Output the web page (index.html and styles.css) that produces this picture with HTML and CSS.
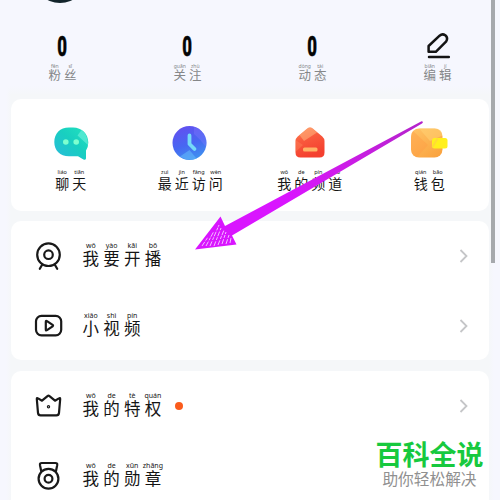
FILE: index.html
```html
<!DOCTYPE html>
<html lang="zh-CN">
<head>
<meta charset="utf-8">
<title>我的</title>
<link rel="stylesheet" href="styles.css">
</head>
<body>
<main class="screen">
  <header class="profile"><div class="avatar"></div></header>

  <section class="stats">
    <div class="stat"><div class="value"><b>0</b></div><div class="label small"><span class="ch"><i>fěn</i>粉</span><span class="ch"><i>sī</i>丝</span></div></div>
    <div class="stat"><div class="value"><b>0</b></div><div class="label small"><span class="ch"><i>guān</i>关</span><span class="ch"><i>zhù</i>注</span></div></div>
    <div class="stat"><div class="value"><b>0</b></div><div class="label small"><span class="ch"><i>dòng</i>动</span><span class="ch"><i>tài</i>态</span></div></div>
    <div class="stat"><div class="value">
      <svg width="26" height="30" viewBox="0 0 26 30" fill="none" stroke="#141414" stroke-width="2.5" stroke-linecap="round" stroke-linejoin="round"><path d="M2.600 20.800V15L13.600 4.700Q16.300 2.300 19.300 4.300Q22.500 7.100 20 10.700L9.800 20.800Z"/><path d="M3 26H22.800"/></svg>
    </div><div class="label small"><span class="ch"><i>biān</i>编</span><span class="ch"><i>jí</i>辑</span></div></div>
  </section>

  <section class="card shortcuts">
    <div class="shortcut">
      <svg width="40" height="40" viewBox="0 0 40 40">
        <defs><linearGradient id="chat" x1="0" y1="1" x2="1" y2="0"><stop offset="0" stop-color="#2ab9dc"/><stop offset=".55" stop-color="#18cfc0"/><stop offset="1" stop-color="#22e3be"/></linearGradient></defs>
        <path d="M18 4.500h4C31 4.500 37.300 11 37.300 19.500Q37.300 24 35 27.500V35.500Q34.500 37.500 32.500 36.500L27 33.200H18C9 33.200 3.300 27.500 3.300 19S9 4.500 18 4.500Z" fill="url(#chat)"/>
        <path d="M26.500 12.500l4-5.500q6.500 4.500 6.500 15Z" fill="#62ecd7" opacity=".75"/>
        <circle cx="14.800" cy="19" r="2.800" fill="#7dffcf"/><circle cx="25.200" cy="19" r="2.800" fill="#7dffcf"/>
      </svg>
      <div class="label medium"><span class="ch"><i>liáo</i>聊</span><span class="ch"><i>tiān</i>天</span></div>
    </div>
    <div class="shortcut">
      <svg width="40" height="40" viewBox="0 0 40 40">
        <defs><linearGradient id="clock" x1=".25" y1="0" x2=".6" y2="1"><stop offset="0" stop-color="#634ff0"/><stop offset=".55" stop-color="#4767f2"/><stop offset="1" stop-color="#3f91ef"/></linearGradient></defs>
        <circle cx="19.500" cy="20" r="17" fill="url(#clock)"/>
        <path d="M24 11Q31 17 36 24Q38 17 33.500 11Q29 5 24 4Z" fill="#8a82ff" opacity=".3"/>
        <path d="M10 33.500L19.500 27l7 8.500Q18 39 10 33.500Z" fill="#62b8fa" opacity=".6"/>
        <path d="M19.500 12.500V21L24.500 26" fill="none" stroke="#75daf8" stroke-width="3.800" stroke-linecap="round" stroke-linejoin="round"/>
      </svg>
      <div class="label medium"><span class="ch"><i>zuì</i>最</span><span class="ch"><i>jìn</i>近</span><span class="ch"><i>fǎng</i>访</span><span class="ch"><i>wèn</i>问</span></div>
    </div>
    <div class="shortcut">
      <svg width="40" height="40" viewBox="0 0 40 40">
        <defs><linearGradient id="home" x1="0" y1="0" x2=".35" y2="1"><stop offset="0" stop-color="#ff8a58"/><stop offset=".45" stop-color="#f95a3d"/><stop offset="1" stop-color="#f4402f"/></linearGradient></defs>
        <path d="M17 5.800Q20 3.200 23 5.800L32.300 13.500Q34.500 15.500 34.500 18V29.500Q34.500 34.500 29.500 34.500H10.500Q5.500 34.500 5.500 29.500V18Q5.500 15.500 7.700 13.500Z" fill="url(#home)"/>
        <path d="M17 5.800Q20 3.200 23 5.800L27 9.500 14 18 9.500 12Z" fill="#ffad78" opacity=".6"/>
        <path d="M5.500 17l7.500 5-7.500 7Z" fill="#ff9a6b" opacity=".3"/>
        <rect x="13" y="24.500" width="14.500" height="4" rx="1.500" fill="#ffb266"/>
      </svg>
      <div class="label medium"><span class="ch"><i>wǒ</i>我</span><span class="ch"><i>de</i>的</span><span class="ch"><i>pín</i>频</span><span class="ch"><i>dào</i>道</span></div>
    </div>
    <div class="shortcut">
      <svg width="40" height="40" viewBox="0 0 40 40">
        <defs><linearGradient id="purse" x1="0" y1="0" x2=".8" y2="1"><stop offset="0" stop-color="#ffc466"/><stop offset="1" stop-color="#faa33f"/></linearGradient></defs>
        <rect x="2" y="5.500" width="31.500" height="29" rx="8" fill="url(#purse)"/>
        <path d="M2 25V13.500q0-3.500 2-5.500L19 22 8 34.200q-6-1.500-6-9.200Z" fill="#ff9e45" opacity=".45"/>
        <path d="M10 5.500h16q7 0 7.500 7L21 18Z" fill="#ffd375" opacity=".5"/>
        <rect x="23" y="15" width="15.500" height="10.500" rx="2.500" fill="#fff01d"/>
        <path d="M23.500 24L28.500 15.500" stroke="#ffdb37" stroke-width="2"/>
      </svg>
      <div class="label medium"><span class="ch"><i>qián</i>钱</span><span class="ch"><i>bāo</i>包</span></div>
    </div>
  </section>

  <section class="card menu">
    <div class="row">
      <svg class="icon" width="30" height="30" viewBox="0 0 30 30"><circle cx="15.500" cy="13.700" r="11.300"/><circle cx="15.500" cy="13.700" r="4.300"/><path d="M9 24l-2.200 3.800M22 24l2.200 3.800"/></svg>
      <div class="label large"><span class="ch"><i>wǒ</i>我</span><span class="ch"><i>yào</i>要</span><span class="ch"><i>kāi</i>开</span><span class="ch"><i>bō</i>播</span></div>
      <svg class="chevron" width="10" height="14" viewBox="0 0 10 14"><path d="M1.500 1l6 6-6 6"/></svg>
    </div>
    <div class="row">
      <svg class="icon" width="30" height="30" viewBox="0 0 30 30"><rect x="3" y="4.800" width="25.200" height="19.500" rx="5.500"/><path d="M12.800 11v7.500q0 1.500 1.200.7l5.600-3.900q.9-.7 0-1.400l-5.600-3.800q-1.200-.7-1.200.9Z"/></svg>
      <div class="label large"><span class="ch"><i>xiǎo</i>小</span><span class="ch"><i>shì</i>视</span><span class="ch"><i>pín</i>频</span></div>
      <svg class="chevron" width="10" height="14" viewBox="0 0 10 14"><path d="M1.500 1l6 6-6 6"/></svg>
    </div>
  </section>

  <section class="card menu last">
    <div class="row">
      <svg class="icon" width="30" height="30" viewBox="0 0 30 30"><path d="M3.800 8q0-1.500 1.300-.6l3.900 2.300 5.500-4.600q1-.8 2 0l5.500 4.600 3.900-2.300q1.300-.9 1.300.6L26 21.800q-.2 2.500-2.600 2.500H7.600q-2.400 0-2.600-2.500Z"/><circle cx="15.500" cy="15.700" r=".6"/></svg>
      <div class="label large"><span class="ch"><i>wǒ</i>我</span><span class="ch"><i>de</i>的</span><span class="ch"><i>tè</i>特</span><span class="ch"><i>quán</i>权</span></div>
      <span class="dot"></span>
      <svg class="chevron" width="10" height="14" viewBox="0 0 10 14"><path d="M1.500 1l6 6-6 6"/></svg>
    </div>
    <div class="row">
      <svg class="icon" width="30" height="30" viewBox="0 0 30 30"><circle cx="15.500" cy="17.800" r="9.900"/><circle cx="15.500" cy="17.800" r="3.900"/><path d="M8.200 10L7 4.200Q6.600 2 8.800 2h13.600q2.200 0 1.800 2.200L23 10"/></svg>
      <div class="label large"><span class="ch"><i>wǒ</i>我</span><span class="ch"><i>de</i>的</span><span class="ch"><i>xūn</i>勋</span><span class="ch"><i>zhāng</i>章</span></div>
    </div>
  </section>

  <div class="scrollbar"></div>
  <svg class="arrow" width="240" height="140" viewBox="190 115 240 140">
    <defs><linearGradient id="shaft" x1="1" y1="0" x2="0" y2="1"><stop offset="0" stop-color="#b324ca"/><stop offset=".35" stop-color="#cd1ce8"/><stop offset=".6" stop-color="#d915ff"/></linearGradient></defs>
    <path d="M421.500 121.200Q424 121.500 422 123.500L232 235.500L236.500 244.500 195 249.500 220.500 216.500 225 226Z" fill="url(#shaft)"/>
    <path d="M202 246l6-9M206 246l8-15M210 246l9-21M214 246l7-18M218 245l6-15M222 244l4-12M226 244l3-9M230 243l1-5" stroke="#fff" stroke-width=".9" stroke-dasharray="5 1.500 3 1" opacity=".8"/>
  </svg>
  <div class="watermark"><strong>百科全说</strong><span>助你轻松解决</span></div>
</main>
</body>
</html>
```
FILE: styles.css
```css
* { box-sizing: border-box; }

body {
  margin: 0;
  font-family: "Noto Sans CJK SC", "Noto Sans", sans-serif;
}

.screen {
  position: relative;
  width: 500px;
  height: 500px;
  padding: 0 11px;
  overflow: hidden;
  background:
    linear-gradient(#f6f7fe 0, #f6f7fe 85px, transparent 95px),
    linear-gradient(90deg, #f6f7fe 6px, #f5f7f9 11px, #f5f7f9 489px, #f6f7fe 494px);
}

.profile {
  height: 30px;
  overflow: hidden;
}

.avatar {
  width: 54px;
  height: 54px;
  margin: -51px 0 0 22px;
  border-radius: 50%;
  background: #13242b;
}

.stats {
  display: grid;
  grid-template-columns: repeat(4, 125px);
  width: 500px;
  height: 69px;
  margin-left: -11px;
}

.value {
  display: flex;
  align-items: center;
  justify-content: center;
  height: 34px;
}

.stat:last-child .value { padding-left: 2px; }
.value svg { margin-top: -3px; }

.value b {
  color: #050505;
  font: 900 28px/34px Roboto, sans-serif;
  -webkit-text-stroke: .4px #050505;
  transform: scaleX(.6);
}

.label {
  display: flex;
  justify-content: center;
  color: #151515;
}

.ch {
  display: flex;
  flex: none;
  flex-direction: column;
  align-items: center;
  white-space: nowrap;
}

.ch i {
  font-family: "Noto Sans", sans-serif;
  font-style: normal;
}

.small { color: #858789; font-size: 12.5px; line-height: 14px; }
.small .ch { width: 15.500px; }
.small i { height: 4px; font-size: 5px; line-height: 5px; }

.medium { font-size: 14px; line-height: 16px; }
.medium .ch { width: 17px; }
.medium i { height: 5px; font-size: 5.500px; line-height: 5px; }

.large { margin-top: -4px; font-size: 16.500px; line-height: 18px; }
.large .ch { width: 20.700px; }
.large i { height: 7px; font-size: 7px; line-height: 7px; }

.card {
  border-radius: 10px;
  background: #fff;
}

.shortcuts {
  display: grid;
  grid-template-columns: repeat(4, 119.500px);
  height: 112px;
  padding-top: 24px;
}

.shortcut {
  display: flex;
  flex-direction: column;
  align-items: center;
}

.shortcut .label { margin-top: 7px; }

.menu {
  height: 139px;
  margin-top: 10px;
}

.last {
  height: 142px;
  margin-top: 11px;
}

.row {
  display: flex;
  align-items: center;
  height: 70px;
  padding: 0 20px 0 22px;
}

.icon {
  flex: none;
  margin-right: 17.500px;
  fill: none;
  stroke: #191919;
  stroke-width: 2.200;
  stroke-linecap: round;
  stroke-linejoin: round;
}

.chevron {
  margin-left: auto;
  fill: none;
  stroke: #c5c6c8;
  stroke-width: 1.800;
}

.dot {
  width: 8.500px;
  height: 8.500px;
  margin-left: 11.500px;
  border-radius: 50%;
  background: #fa5b1c;
}

.scrollbar {
  position: absolute;
  top: 0;
  left: 491px;
  width: 4px;
  height: 263px;
  background: #a6a9ad;
}

.arrow {
  position: absolute;
  top: 115px;
  left: 190px;
}

.watermark {
  position: absolute;
  top: 437px;
  left: 370px;
  display: flex;
  flex-direction: column;
  align-items: center;
  width: 119px;
  color: #909090;
  font-size: 15.700px;
  line-height: 18px;
  white-space: nowrap;
}

.watermark strong {
  color: #17c93e;
  font-size: 27px;
  font-weight: 700;
  line-height: 33px;
}
```
